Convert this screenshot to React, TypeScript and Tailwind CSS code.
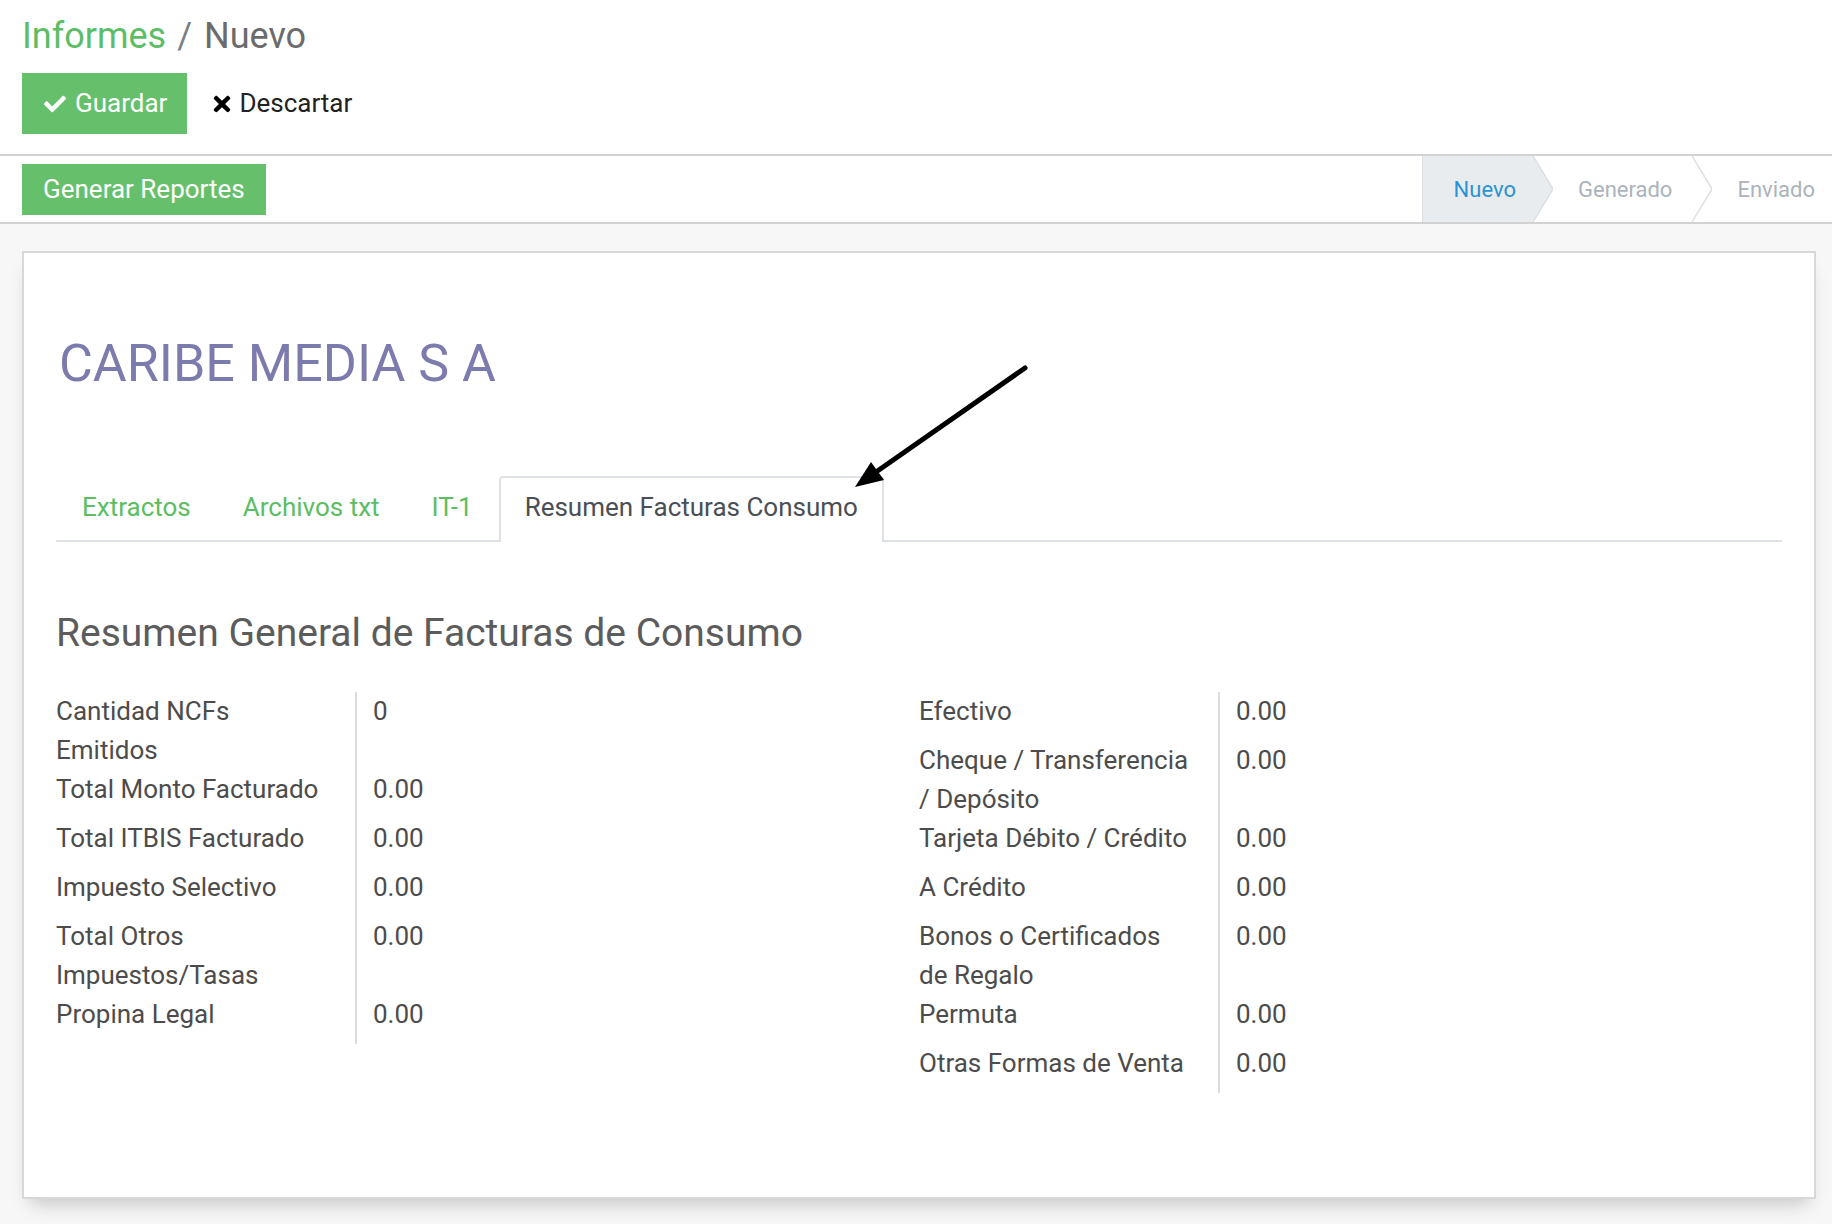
import React from "react";
import { FaCheck, FaTimes } from "react-icons/fa";

const leftRows: { label: React.ReactNode; value: string }[] = [
  { label: <>Cantidad NCFs<br />Emitidos</>, value: "0" },
  { label: "Total Monto Facturado", value: "0.00" },
  { label: "Total ITBIS Facturado", value: "0.00" },
  { label: "Impuesto Selectivo", value: "0.00" },
  { label: <>Total Otros<br />Impuestos/Tasas</>, value: "0.00" },
  { label: "Propina Legal", value: "0.00" },
];

const rightRows: { label: React.ReactNode; value: string }[] = [
  { label: "Efectivo", value: "0.00" },
  { label: <>Cheque / Transferencia<br />/ Depósito</>, value: "0.00" },
  { label: "Tarjeta Débito / Crédito", value: "0.00" },
  { label: "A Crédito", value: "0.00" },
  { label: <>Bonos o Certificados<br />de Regalo</>, value: "0.00" },
  { label: "Permuta", value: "0.00" },
  { label: "Otras Formas de Venta", value: "0.00" },
];

function FieldGroup({ rows }: { rows: { label: React.ReactNode; value: string }[] }) {
  return (
    <div className="grid grid-cols-[301px_1fr] content-start self-start">
      {rows.map((r, i) => (
        <React.Fragment key={i}>
          <div className="min-h-[49px] border-r-2 border-[#dcdcdc] whitespace-nowrap text-[26px] leading-[39px] text-[#4c4c4c]">
            {r.label}
          </div>
          <div className="min-h-[49px] pl-[16px] text-[26px] leading-[39px] text-[#4c4c4c]">{r.value}</div>
        </React.Fragment>
      ))}
    </div>
  );
}

export default function App() {
  return (
    <div className="relative w-[1832px] h-[1224px] overflow-hidden bg-[#f7f7f7] font-['Roboto',sans-serif]">
      {/* Control panel */}
      <div className="h-[154px] bg-white pl-[22px] pt-[18px]">
        <div className="flex items-baseline text-[36px] leading-none">
          <span className="text-[#5dbd67]">Informes</span>
          <span className="ml-[11px] mr-[12px] text-[#7a7f85]">/</span>
          <span className="text-[#6b6b6b]">Nuevo</span>
        </div>
        <div className="mt-[19px] flex items-center">
          <button className="flex h-[61px] items-center gap-[9px] bg-[#66bf6b] pl-[22px] pr-[20px] text-[26px] text-white">
            <FaCheck size={22} />
            <span>Guardar</span>
          </button>
          <button className="ml-[23px] flex items-center gap-[5px] text-[26px] text-[#222]">
            <FaTimes size={24} className="text-black" />
            <span>Descartar</span>
          </button>
        </div>
      </div>

      {/* Status bar */}
      <div className="flex h-[70px] items-center justify-between border-y-2 border-[#d2d2d2] bg-white pl-[22px]">
        <button className="h-[51px] bg-[#66bf6b] px-[21px] text-[26px] text-white">Generar Reportes</button>
        <div className="flex h-full items-stretch text-[22px]">
          <div className="flex items-center border-l border-[#dcdfe3] bg-[#e9ecef] pl-[31px] pr-[17px] text-[#2a93d4]">Nuevo</div>
          <svg width="20" height="66" viewBox="0 0 20 66" className="block">
            <polygon points="0,0 20,33 0,66" fill="#e9ecef" />
            <polyline points="0,0 20,33 0,66" fill="none" stroke="#dcdfe3" strokeWidth="1.5" />
          </svg>
          <div className="flex items-center pl-[25px] pr-[20px] text-[#abb3bb]">Generado</div>
          <svg width="20" height="66" viewBox="0 0 20 66" className="block">
            <polyline points="0,0 20,33 0,66" fill="none" stroke="#dcdfe3" strokeWidth="1.5" />
          </svg>
          <div className="flex items-center pl-[25px] pr-[17px] text-[#abb3bb]">Enviado</div>
        </div>
      </div>

      {/* Sheet */}
      <div className="pt-[27px]">
        <div className="ml-[22px] h-[948px] w-[1794px] border-2 border-[#d8d8d8] bg-white px-[32px] pt-[85px] shadow-[0_12px_18px_-8px_rgba(0,0,0,0.22)]">
          <h1 className="ml-[3px] text-[52px] leading-none text-[#7c7bad]">CARIBE MEDIA S A</h1>

          <div className="mt-[86px] flex border-b-2 border-[#dee2e6] text-[26px] leading-[39px]">
            <div className="border-2 border-b-0 border-transparent px-[24px] pb-[13px] pt-[10px] text-[#5cbd62]">Extractos</div>
            <div className="border-2 border-b-0 border-transparent px-[24px] pb-[13px] pt-[10px] text-[#5cbd62]">Archivos txt</div>
            <div className="border-2 border-b-0 border-transparent px-[24px] pb-[13px] pt-[10px] text-[#5cbd62]">IT-1</div>
            <div className="-mb-[2px] rounded-t-[4px] border-2 border-b-0 border-[#dee2e6] bg-white px-[24px] pb-[15px] pt-[10px] text-[#4a4f55]">
              Resumen Facturas Consumo
            </div>
          </div>

          <h2 className="mt-[70px] text-[39px] leading-[1.1] text-[#5c5c5c]">Resumen General de Facturas de Consumo</h2>

          <div className="mt-[37px] grid grid-cols-2 items-start">
            <FieldGroup rows={leftRows} />
            <FieldGroup rows={rightRows} />
          </div>
        </div>
      </div>

      {/* Annotation arrow */}
      <svg className="absolute left-[840px] top-[355px]" width="200" height="145" viewBox="0 0 200 145">
        <line x1="185" y1="13" x2="36" y2="117" stroke="#000" strokeWidth="5" strokeLinecap="round" />
        <polygon points="15,132 44,125 31,107" fill="#000" />
      </svg>
    </div>
  );
}
